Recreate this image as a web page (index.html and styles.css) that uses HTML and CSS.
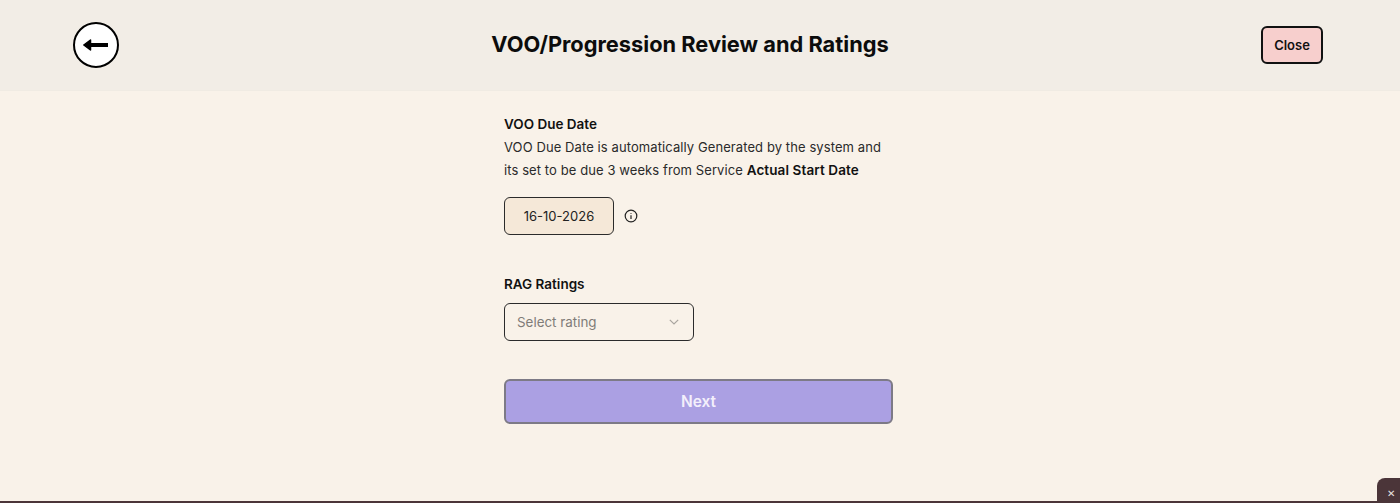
FILE: index.html
```html
<!DOCTYPE html>
<html lang="en">
<head>
<meta charset="utf-8">
<title>VOO/Progression Review and Ratings</title>
<link rel="stylesheet" href="styles.css">
</head>
<body>
<header class="header">
  <button class="back" aria-label="Back">
    <svg width="26" height="14" viewBox="0 0 26 14" aria-hidden="true"><path class="back-shaft" d="M7 7H25"/><path class="back-head" d="M.8 7 7.500 2V12Z"/></svg>
  </button>
  <h1 class="title">VOO/Progression Review and Ratings</h1>
  <button class="close">Close</button>
</header>
<main class="main">
  <form class="form">
    <h2 class="label">VOO Due Date</h2>
    <p class="desc">VOO Due Date is automatically Generated by the system and its set to be due 3 weeks from Service <strong>Actual Start Date</strong></p>
    <div class="date-row">
      <div class="date">16-10-2026</div>
      <svg class="info" width="14" height="14" viewBox="0 0 14 14" aria-hidden="true"><circle cx="7" cy="7" r="5.800"/><path d="M7 6.300V10M7 4V4.800"/></svg>
    </div>
    <h2 class="label rag">RAG Ratings</h2>
    <div class="select">
      <span>Select rating</span>
      <svg width="10" height="6" viewBox="0 0 10 6" aria-hidden="true"><path d="M.8.800 5 5 9.200.800"/></svg>
    </div>
    <button class="next" type="button">Next</button>
  </form>
</main>
<div class="corner" aria-label="Dismiss">✕</div>
</body>
</html>
```
FILE: styles.css
```css
* { box-sizing: border-box; }
html, body { height: 100%; }
body {
  margin: 0;
  height: 503px;
  overflow: hidden;
  position: relative;
  display: flex;
  flex-direction: column;
  background: #f9f2e9;
  color: #111;
  font-family: Inter, "Liberation Sans", sans-serif;
  border-bottom: 2px solid #4b3539;
}
button { font-family: inherit; cursor: pointer; }
.header {
  height: 91px;
  flex: none;
  display: flex;
  align-items: center;
  justify-content: space-between;
  padding: 0 77px 0 73px;
  background: #f2ede6;
  border-bottom: 1px solid #f0ebe3;
  position: relative;
}
.back {
  width: 46px;
  height: 46px;
  border: 2px solid #000;
  border-radius: 50%;
  background: #fff;
  padding: 0;
  display: flex;
  align-items: center;
  justify-content: center;
}
.back-shaft { stroke: #000; stroke-width: 4; fill: none; }
.back-head { fill: #000; stroke: #000; stroke-width: 1.500; stroke-linejoin: round; }
.title {
  position: absolute;
  left: 0;
  right: 20px;
  margin: 0 0 2px;
  text-align: center;
  font-size: 21.800px;
  line-height: 30px;
  font-weight: 650;
  color: #0c0c0c;
  pointer-events: none;
}
.close {
  width: 62px;
  height: 38px;
  padding: 0;
  border: 2px solid #111;
  border-radius: 6px;
  background: #f7cfcd;
  color: #111;
  font-size: 13px;
  font-weight: 600;
}
.main { flex: 1; display: flex; justify-content: center; padding: 22px 3px 0 0; }
.form { width: 389px; }
.label {
  margin: 0;
  font-size: 13.500px;
  line-height: 23px;
  font-weight: 600;
  color: #111;
}
.desc {
  margin: 0;
  font-size: 13px;
  line-height: 23px;
  letter-spacing: .09px;
  color: #2a2a2a;
}
.desc strong { font-size: 13.500px; font-weight: 600; letter-spacing: .1px; color: #111; }
.date-row { display: flex; align-items: center; gap: 10px; margin-top: 15px; }
.date {
  width: 110px;
  height: 38px;
  padding-bottom: 1px;
  border: 1.500px solid #2b2b2b;
  border-radius: 6px;
  background: #f5e8d8;
  display: flex;
  align-items: center;
  justify-content: center;
  font-size: 13px;
  color: #222;
}
.info circle, .info path { fill: none; stroke: #222; stroke-width: 1.200; }
.rag { margin-top: 38px; }
.select {
  width: 190px;
  height: 38px;
  margin-top: 7px;
  padding: 0 14px 0 12px;
  border: 1.500px solid #2b2b2b;
  border-radius: 6px;
  background: #f9f2e9;
  display: flex;
  align-items: center;
  justify-content: space-between;
  font-size: 13.400px;
  color: #807c78;
}
.select path { fill: none; stroke: #a9a59f; stroke-width: 1.200; }
.next {
  display: block;
  width: 389px;
  height: 45px;
  margin-top: 38px;
  border: 2px solid #7d7a86;
  border-radius: 6px;
  background: #aba0e3;
  color: #f3effb;
  font-size: 15.500px;
  font-weight: 600;
}
.corner {
  position: absolute;
  right: 0;
  bottom: -2px;
  width: 23px;
  height: 25px;
  padding: 9px 0 0 10px;
  background: #4b3539;
  border-radius: 8px 0 0 0;
  color: #e8e2e0;
  font-size: 10px;
  line-height: 14px;
  font-family: "DejaVu Sans", sans-serif;
}
```
